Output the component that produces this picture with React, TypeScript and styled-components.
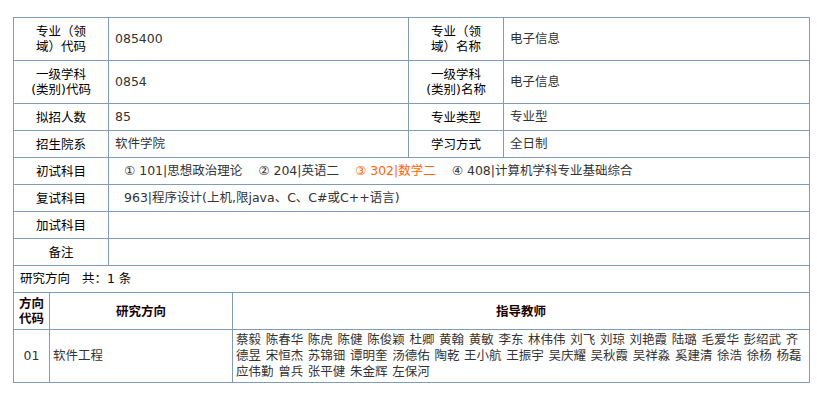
import React from "react";
import styled, { createGlobalStyle } from "styled-components";

const GlobalStyle = createGlobalStyle`
    body {
        margin: 0;
        background: #ffffff;
        font-family: "DejaVu Sans", "Noto Sans CJK SC", sans-serif;
        font-size: 12.5px;
        color: #333333;
    }
`;

const Wrap = styled.div`
    padding: 17px 0 0 13px;
`;

const Table = styled.table`
    width: 797px;
    border-collapse: collapse;
    table-layout: fixed;
    line-height: 16px;
`;

const Col = styled.col<{ $w: number }>`
    width: ${(p) => p.$w}px;
`;

const Row = styled.tr<{ $h: number }>`
    height: ${(p) => p.$h}px;
`;

const Cell = styled.td`
    border: 1px solid #7f9db9;
    padding: 0 6px;
    vertical-align: middle;
`;

const Label = styled(Cell)`
    text-align: center;
    color: #000000;
    line-height: 15px;
    padding: 0 2px;
`;

const Value = styled(Cell)<{ $indent?: boolean }>`
    text-align: left;
    color: #333333;
    padding-left: ${(p) => (p.$indent ? "15px" : "6px")};
`;

const Subject = styled.span<{ $hot?: boolean }>`
    color: ${(p) => (p.$hot ? "#ff6600" : "#333333")};
    margin-right: 16px;
    white-space: nowrap;
`;

const Count = styled(Cell)`
    color: #000000;
    padding-left: 6px;
`;

const Head = styled(Cell)`
    font-weight: bold;
    color: #1a0000;
    text-align: center;
    line-height: 15px;
    padding: 2px 1px;
`;

const Body = styled(Cell)<{ $align?: string; $spaced?: boolean }>`
    text-align: ${(p) => p.$align ?? "left"};
    padding: 2px 3px;
    color: #333333;
    word-spacing: ${(p) => (p.$spaced ? "0.7px" : "normal")};
`;

const subjects = [
    { text: "① 101|思想政治理论" },
    { text: "② 204|英语二" },
    { text: "③ 302|数学二", hot: true },
    { text: "④ 408|计算机学科专业基础综合" },
];

const teachers =
    "蔡毅 陈春华 陈虎 陈健 陈俊颖 杜卿 黄翰 黄敏 李东 林伟伟 刘飞 刘琼 刘艳霞 陆璐 毛爱华 彭绍武 齐德昱 宋恒杰 苏锦钿 谭明奎 汤德佑 陶乾 王小航 王振宇 吴庆耀 吴秋霞 吴祥淼 奚建清 徐浩 徐杨 杨磊 应伟勤 曾兵 张平健 朱金辉 左保河";

export default function App() {
    return (
        <>
            <GlobalStyle />
            <Wrap>
                <Table>
                    <colgroup>
                        <Col $w={36} />
                        <Col $w={59} />
                        <Col $w={124} />
                        <Col $w={176} />
                        <Col $w={95} />
                        <Col $w={306} />
                    </colgroup>
                    <tbody>
                        <Row $h={43}>
                            <Label colSpan={2}>
                                专业（领<br />域）代码
                            </Label>
                            <Value colSpan={2}>085400</Value>
                            <Label>
                                专业（领<br />域）名称
                            </Label>
                            <Value>电子信息</Value>
                        </Row>
                        <Row $h={43}>
                            <Label colSpan={2}>
                                一级学科<br />(类别)代码
                            </Label>
                            <Value colSpan={2}>0854</Value>
                            <Label>
                                一级学科<br />(类别)名称
                            </Label>
                            <Value>电子信息</Value>
                        </Row>
                        <Row $h={27}>
                            <Label colSpan={2}>拟招人数</Label>
                            <Value colSpan={2}>85</Value>
                            <Label>专业类型</Label>
                            <Value>专业型</Value>
                        </Row>
                        <Row $h={27}>
                            <Label colSpan={2}>招生院系</Label>
                            <Value colSpan={2}>软件学院</Value>
                            <Label>学习方式</Label>
                            <Value>全日制</Value>
                        </Row>
                        <Row $h={27}>
                            <Label colSpan={2}>初试科目</Label>
                            <Value colSpan={4} $indent>
                                {subjects.map((s) => (
                                    <Subject key={s.text} $hot={s.hot}>
                                        {s.text}
                                    </Subject>
                                ))}
                            </Value>
                        </Row>
                        <Row $h={27}>
                            <Label colSpan={2}>复试科目</Label>
                            <Value colSpan={4} $indent>
                                963|程序设计(上机,限java、C、C#或C++语言)
                            </Value>
                        </Row>
                        <Row $h={27}>
                            <Label colSpan={2}>加试科目</Label>
                            <Value colSpan={4}></Value>
                        </Row>
                        <Row $h={27}>
                            <Label colSpan={2}>备注</Label>
                            <Value colSpan={4}></Value>
                        </Row>
                        <Row $h={27}>
                            <Count colSpan={6}>研究方向&nbsp;&nbsp;&nbsp;共：1 条</Count>
                        </Row>
                        <Row $h={37}>
                            <Head>
                                方向<br />代码
                            </Head>
                            <Head colSpan={2}>研究方向</Head>
                            <Head colSpan={3}>指导教师</Head>
                        </Row>
                        <Row $h={53}>
                            <Body $align="center">01</Body>
                            <Body colSpan={2}>软件工程</Body>
                            <Body colSpan={3} $spaced>
                                {teachers}
                            </Body>
                        </Row>
                    </tbody>
                </Table>
            </Wrap>
        </>
    );
}
